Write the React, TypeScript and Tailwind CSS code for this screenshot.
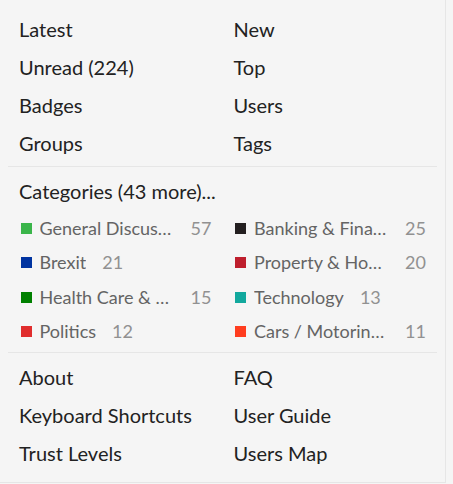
import React from "react";

const top = [
  ["Latest", "New"],
  ["Unread (224)", "Top"],
  ["Badges", "Users"],
  ["Groups", "Tags"],
];
const bottom = [
  ["About", "FAQ"],
  ["Keyboard Shortcuts", "User Guide"],
  ["Trust Levels", "Users Map"],
];
const cats: [string, string, string][] = [
  ["General Discussion", "#3ab54a", "57"],
  ["Banking & Finance", "#231f20", "25"],
  ["Brexit", "#0033a0", "21"],
  ["Property & Housing", "#be1e2d", "20"],
  ["Health Care & Medicine", "#008000", "15"],
  ["Technology", "#12a89d", "13"],
  ["Politics", "#e02d2d", "12"],
  ["Cars / Motoring & Transport", "#ff3d1f", "11"],
];

function LinkGrid({ rows }: { rows: string[][] }) {
  return (
    <div className="grid grid-cols-2">
      {rows.flat().map((t) => (
        <div key={t} className="h-[38px] flex items-center px-[11px] text-[20px] text-[#222222]">
          {t}
        </div>
      ))}
    </div>
  );
}

export default function App() {
  return (
    <div className="w-[453px] h-[484px] bg-[#f5f5f5]" style={{ fontFamily: "Lato, 'Noto Sans', sans-serif" }}>
      <div className="w-[446px] h-[483px] border-r border-b border-[#e6e6e6] px-2 pt-[10px]">
        <div className="pb-[4px] border-b border-[#e6e6e6]">
          <LinkGrid rows={top} />
        </div>
        <div className="pt-[5px] pb-[3px] border-b border-[#e6e6e6]">
          <div className="h-[38px] flex items-center px-[11px] text-[20px] text-[#222222]">Categories (43 more)...</div>
          <div className="grid grid-cols-2 pt-[1px]">
            {cats.map(([name, color, count]) => (
              <div key={name} className="h-[34.5px] flex items-center pl-[12.5px] text-[18px]">
                <span className="w-[11px] h-[11px] shrink-0 mr-[8px]" style={{ backgroundColor: color }} />
                <span className="max-w-[135px] truncate text-[#646464]">{name}</span>
                <span className="ml-[16px] text-[#919191]">{count}</span>
              </div>
            ))}
          </div>
        </div>
        <div className="pt-[5px]">
          <LinkGrid rows={bottom} />
        </div>
      </div>
    </div>
  );
}
